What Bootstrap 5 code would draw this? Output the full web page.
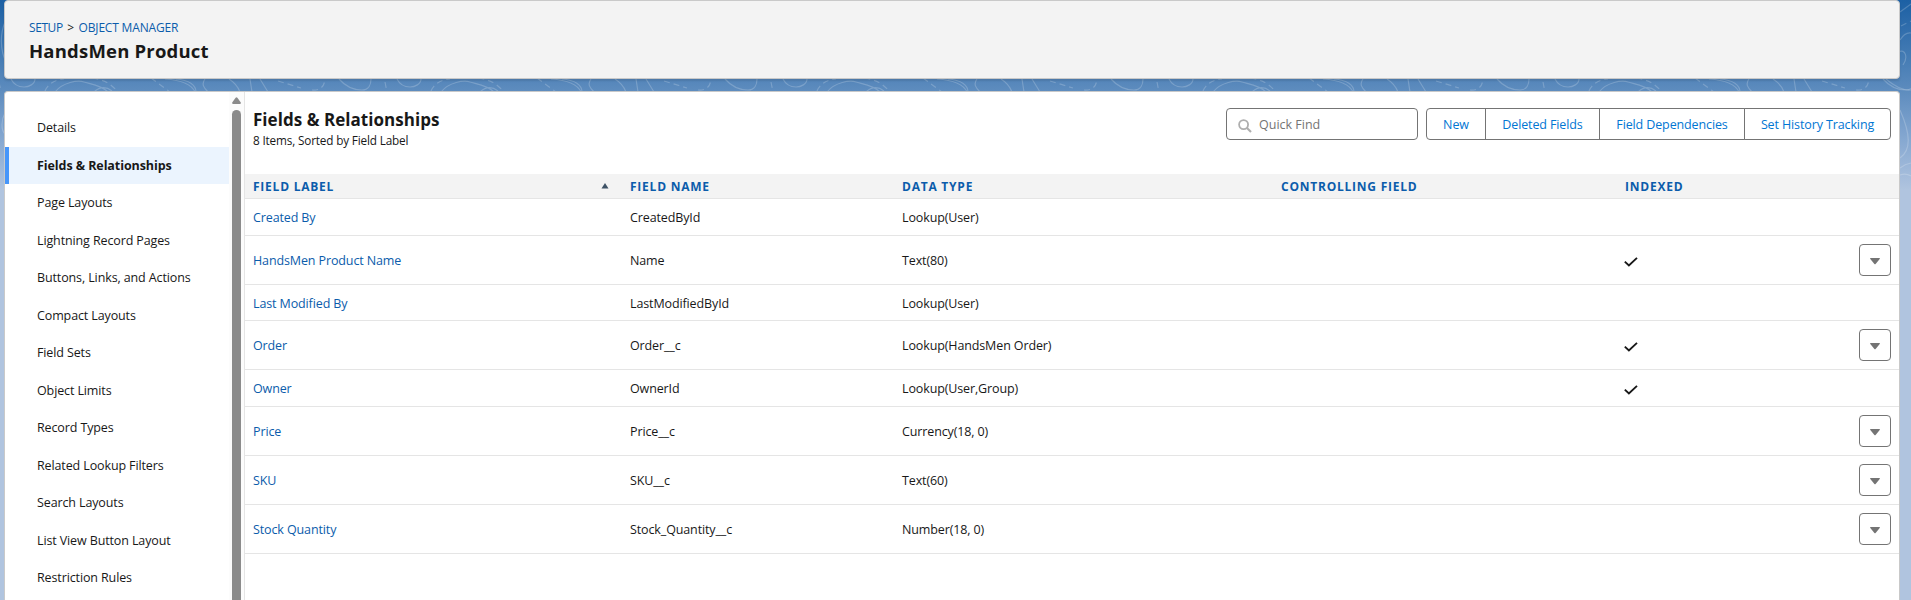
<!DOCTYPE html>
<html lang="en">
<head>
<meta charset="utf-8">
<meta name="viewport" content="width=device-width, initial-scale=1">
<title>HandsMen Product | Object Manager</title>
<link href="https://cdn.jsdelivr.net/npm/bootstrap@5.3.0/dist/css/bootstrap.min.css" rel="stylesheet">
<style>
  body { font-family: "Open Sans", "Noto Sans", sans-serif; font-size: 12.5px; line-height: 19.5px; color: #181818;
    height: 600px; overflow: hidden; padding: 0 11px 0 4px; position: relative; isolation: isolate;
    background: linear-gradient(#1c60a4 0, #5989bc 85px, #86a8d1 140px, #b0c4df 190px); }
  a { color: #0b5cab; text-decoration: none; }
  .backdrop { position: absolute; left: 0; top: 0; width: 1911px; height: 200px; z-index: -1; }
  .page-top { background: #f3f3f3; border: 1px solid #c9c9c9; border-radius: 4px; height: 79px; margin-bottom: 12px;
    padding: 17px 24px 0; box-shadow: 0 2px 2px rgba(0,0,0,.1); }
  .crumbs { font-size: 12px; line-height: 19px; gap: 4.5px; }
  .crumbs a { letter-spacing: -.42px; }
  .crumbs a:last-child { letter-spacing: -.18px; }
  .page-top h1 { font-size: 18.5px; line-height: 23px; font-weight: 700; letter-spacing: .2px; margin: 2px 0 0; }
  .panel { background: #fff; border: 1px solid #c9c9c9; border-radius: 4px 4px 0 0; border-bottom: 0; height: 509px; overflow: hidden; }
  .side { width: 240px; border-right: 1px solid #e5e5e5; }
  .side-nav { width: 224px; padding-top: 17px; }
  .side-nav a { display: block; height: 37.5px; line-height: 37.5px; padding-left: 32px; color: #181818; letter-spacing: -.12px; white-space: nowrap; }
  .side-nav a.active { background: #ebf4fe; box-shadow: inset 4px 0 #4696fa; font-weight: 700; letter-spacing: -.08px; }
  .scroll-rail { width: 15px; background: #fcfcfc; }
  .scroll-rail svg { display: block; margin: 5px 0 0 3px; }
  .thumb { width: 9px; height: 520px; margin: 6px 0 0 3px; border-radius: 5px; background: #8b8b8b; }
  .list-head { height: 82px; padding: 16px 8px 0; }
  .list-head h2 { font-size: 17px; line-height: 24px; font-weight: 700; letter-spacing: .04px; margin: 0; }
  .list-head p { font-size: 11.75px; line-height: 18px; letter-spacing: -.16px; margin: -1px 0 0; }
  .find { width: 192px; height: 32px; border: 1px solid #747474; border-radius: 4px; color: #747474; padding: 1px 0 0 11px; margin-right: 8px; gap: 7px; }
  .find svg { margin-top: 3px; }
  .actions .btn { height: 32px; border: 1px solid #747474; border-radius: 4px; color: #0176d3; background: #fff; font-size: 12.5px;
    line-height: 31px; letter-spacing: -.12px; padding: 0; flex: none; white-space: nowrap; }
  .w-new { width: 60px; } .w-del { width: 115px; } .w-dep { width: 146px; } .w-hist { width: 147px; }
  .fields { table-layout: fixed; width: 100%; border-collapse: separate; border-spacing: 0; }
  .fields th { height: 25px; background: #f3f3f3; color: #0b5cab; font-size: 12px; font-weight: 700; letter-spacing: .77px; padding: 1px 8px 0; border-bottom: 1px solid #e5e5e5; }
  .fields td { height: 36px; padding: 2px 8px 0; border-bottom: 1px solid #e5e5e5; vertical-align: middle; letter-spacing: -.12px; }
  .fields .mid td { height: 37px; padding-top: 1px; }
  .fields .tall td { height: 49px; padding-top: 1px; }
  .fields svg { display: block; }
  .fields .sort { margin: -1px 5px 0 0; }
  .fields .tick { margin: 2px 0 0 -1px; }
  .fields .tall td:last-child { padding-top: 0; }
  .menu-btn { display: flex; width: 32px; height: 32px; border: 1px solid #747474; border-radius: 4px; background: #fff; align-items: center; justify-content: center; padding: 2px 0 0; margin-left: auto; }
</style>
<script src="https://cdn.jsdelivr.net/npm/bootstrap@5.3.0/dist/js/bootstrap.bundle.min.js"></script>
</head>
<body>
<svg class="backdrop" viewBox="0 0 1911 200" fill="none" stroke="#fff" stroke-opacity=".2" stroke-width="1.2">
  <defs>
    <g id="contours">
      <path d="M71 79C86 80 97 83 101 92M82 79C95 80 102 85 102 92M111 79C107 84 110 88 114 92M135 79Q143 84 146 92M156 79L158 92M166 79L174 92M245 79C252 87 261 90 268 90S277 84 277 79M303 79C306 85 311 87 316 87S327 84 327 79M347 92C355 82 370 80 376 82S393 85 400 92M386 92Q395 84 404 91"/>
      <path stroke-dasharray="6 4" d="M57 78L76 92M184 81L207 88M218 90Q230 91 231 79M291 82L293 92M337 91Q342 80 356 79M384 78Q400 80 408 90"/>
    </g>
  </defs>
  <use href="#contours" x="-292"/><use href="#contours" x="94"/><use href="#contours" x="480"/><use href="#contours" x="866"/><use href="#contours" x="1252"/><use href="#contours" x="1638"/>
  <path d="M5 22C0 34 0 50 6 62M5 113C1 120 1 130 5 134M1900 12L1911 4M1900 40Q1905 32 1911 33M1898 52C1906 48 1908 58 1903 65M1886 79Q1900 91 1911 90M1900 110C1911 135 1911 150 1900 158M1900 168Q1905 164 1911 163M1900 175Q1906 173 1911 176"/>
  <path stroke-dasharray="6 4" d="M1901 26L1911 21"/>
</svg>
<header class="page-top">
  <div class="crumbs d-flex"><a href="#">SETUP</a><span>&gt;</span><a href="#">OBJECT MANAGER</a></div>
  <h1>HandsMen Product</h1>
</header>
<main class="panel d-flex">
  <aside class="side d-flex flex-shrink-0">
    <nav class="side-nav">
      <a href="#">Details</a>
      <a href="#" class="active">Fields &amp; Relationships</a>
      <a href="#">Page Layouts</a>
      <a href="#">Lightning Record Pages</a>
      <a href="#">Buttons, Links, and Actions</a>
      <a href="#">Compact Layouts</a>
      <a href="#">Field Sets</a>
      <a href="#">Object Limits</a>
      <a href="#">Record Types</a>
      <a href="#">Related Lookup Filters</a>
      <a href="#">Search Layouts</a>
      <a href="#">List View Button Layout</a>
      <a href="#">Restriction Rules</a>
    </nav>
    <div class="scroll-rail"><svg width="9" height="7"><path d="M3.6.8Q4.5-.4 5.4.8L8.8 5.6Q9 7 8 7H1Q0 7 .2 5.6z" fill="#8b8b8b"/></svg><div class="thumb"></div></div>
  </aside>
  <section class="flex-grow-1">
    <div class="list-head d-flex">
      <div class="flex-grow-1"><h2>Fields &amp; Relationships</h2><p>8 Items, Sorted by Field Label</p></div>
      <div class="find d-flex align-items-center"><svg width="14" height="14" fill="none" stroke="#aeaeae" stroke-width="1.8"><circle cx="5.6" cy="5.6" r="4.5"/><path d="M9 9L13 13" stroke-width="2.2"/></svg><span>Quick Find</span></div>
      <div class="btn-group actions align-self-start"><button class="btn w-new">New</button><button class="btn w-del">Deleted Fields</button><button class="btn w-dep">Field Dependencies</button><button class="btn w-hist">Set History Tracking</button></div>
    </div>
    <table class="fields">
      <colgroup><col style="width:377px"><col style="width:272px"><col style="width:379px"><col style="width:344px"><col><col style="width:60px"></colgroup>
      <thead><tr>
        <th><div class="d-flex justify-content-between align-items-center">FIELD LABEL<svg class="sort" width="8" height="6"><path d="M4 0L7.5 5.5H.5z" fill="#3e5266"/></svg></div></th>
        <th>FIELD NAME</th><th>DATA TYPE</th><th>CONTROLLING FIELD</th><th>INDEXED</th><th></th>
      </tr></thead>
      <tbody id="rows"></tbody>
    </table>
  </section>
</main>
<script>
  const tick = '<svg class="tick" width="14" height="10" fill="none" stroke="#181818" stroke-width="1.9"><path d="M.8 4.6L4.9 8.4L13 .9"/></svg>';
  const menu = '<button class="menu-btn" aria-label="Actions"><svg width="10" height="7"><path d="M.6 0H9.4Q10.3 0 9.7.9L5.6 5.9Q5 6.6 4.4 5.9L.3.9Q-.3 0 .6 0z" fill="#747474"/></svg></button>';
  const fields = [
    ['Created By', 'CreatedById', 'Lookup(User)', 0, 0, 'mid'],
    ['HandsMen Product Name', 'Name', 'Text(80)', 1, 1, 'tall'],
    ['Last Modified By', 'LastModifiedById', 'Lookup(User)', 0, 0, ''],
    ['Order', 'Order__c', 'Lookup(HandsMen Order)', 1, 1, 'tall'],
    ['Owner', 'OwnerId', 'Lookup(User,Group)', 1, 0, 'mid'],
    ['Price', 'Price__c', 'Currency(18, 0)', 0, 1, 'tall'],
    ['SKU', 'SKU__c', 'Text(60)', 0, 1, 'tall'],
    ['Stock Quantity', 'Stock_Quantity__c', 'Number(18, 0)', 0, 1, 'tall']
  ];
  document.getElementById('rows').innerHTML = fields.map(([label, name, type, indexed, editable, size]) =>
    `<tr class="${size}"><td><a href="#">${label}</a></td><td>${name}</td><td>${type}</td><td></td><td>${indexed ? tick : ''}</td><td>${editable ? menu : ''}</td></tr>`).join('');
</script>
</body>
</html>
